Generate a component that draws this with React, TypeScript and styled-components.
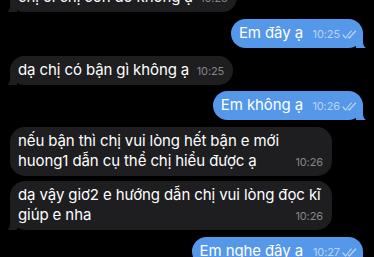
import React from 'react'
import styled, {createGlobalStyle} from 'styled-components'

const GlobalStyle = createGlobalStyle`
  html, body {
    margin: 0;
    padding: 0;
    background: #000;
    overflow: hidden;
  }
  body {
    font-family: Inter, "Noto Sans", "Liberation Sans", sans-serif;
    -webkit-font-smoothing: antialiased;
  }
`

const Chat = styled.div`
  display: flex;
  flex-direction: column;
  padding: 0 11px 0 10px;
  margin-top: -17px;
  width: 374px;
  height: 300px;
  box-sizing: border-box;
  background: #000;
`

const Row = styled.div<{$out?: boolean; $gap: number}>`
  display: flex;
  justify-content: ${p => (p.$out ? 'flex-end' : 'flex-start')};
  margin-top: ${p => p.$gap}px;
`

const Bubble = styled.div<{$out?: boolean}>`
  position: relative;
  max-width: 322px;
  box-sizing: border-box;
  padding: 4px 8px 5px 8px;
  border-radius: 15px;
  background: ${p => (p.$out ? '#5597e8' : '#1e1e20')};
  color: #fff;
  font-size: 15px;
  line-height: 20px;
  letter-spacing: -0.1px;
`

const Spacer = styled.span<{$out?: boolean}>`
  display: inline-block;
  width: ${p => (p.$out ? 52 : 36)}px;
  height: 1px;
`

const Meta = styled.span<{$out?: boolean}>`
  position: absolute;
  right: ${p => (p.$out ? 6 : 9)}px;
  bottom: 7px;
  display: flex;
  align-items: center;
  gap: 2px;
  font-size: 11px;
  line-height: 13px;
  color: ${p => (p.$out ? 'rgba(255, 255, 255, 0.6)' : '#86868c')};
`

const Tail = styled.svg<{$out?: boolean}>`
  position: absolute;
  bottom: 0;
  width: 11px;
  height: 15px;
  ${p => (p.$out ? 'right: -4px; transform: scaleX(-1);' : 'left: -4px;')}
  fill: ${p => (p.$out ? '#5597e8' : '#1e1e20')};
`

function Checks() {
  return (
    <svg width="15" height="9" viewBox="0 0 15 9" fill="none" stroke="currentColor" strokeWidth="1.2" strokeLinecap="round" strokeLinejoin="round">
      <path d="M1 5l2.6 3L9.2 1" />
      <path d="M6.4 7.2L7.2 8 13.6 1" />
    </svg>
  )
}

type Msg = {text: string; time: string; out?: boolean; gap: number; tail?: boolean}

const messages: Msg[] = [
  {text: 'chị ơi chị còn đó không ạ', time: '10:23', gap: 0, tail: true},
  {text: 'Em đây ạ', time: '10:25', out: true, gap: 7, tail: true},
  {text: 'dạ chị có bận gì không ạ', time: '10:25', gap: 8, tail: true},
  {text: 'Em không ạ', time: '10:26', out: true, gap: 6, tail: true},
  {text: 'nếu bận thì chị vui lòng hết bận e mới huong1 dẫn cụ thể chị hiểu được ạ', time: '10:26', gap: 7},
  {text: 'dạ vậy giơ2 e hướng dẫn chị vui lòng đọc kĩ giúp e nha', time: '10:26', gap: 5, tail: true},
  {text: 'Em nghe đây ạ', time: '10:27', out: true, gap: 7, tail: true},
]

export default function App() {
  return (
    <>
      <GlobalStyle />
      <Chat>
        {messages.map((m, i) => (
          <Row key={i} $out={m.out} $gap={m.gap}>
            <Bubble $out={m.out}>
              {m.text}
              <Spacer $out={m.out} />
              <Meta $out={m.out}>
                {m.time}
                {m.out && <Checks />}
              </Meta>
              {m.tail && (
                <Tail $out={m.out} viewBox="0 0 11 15">
                  <path d="M4 0 L11 0 L11 15 L1 15 C3.5 13.5 4 11 4 8 Z" />
                </Tail>
              )}
            </Bubble>
          </Row>
        ))}
      </Chat>
    </>
  )
}
